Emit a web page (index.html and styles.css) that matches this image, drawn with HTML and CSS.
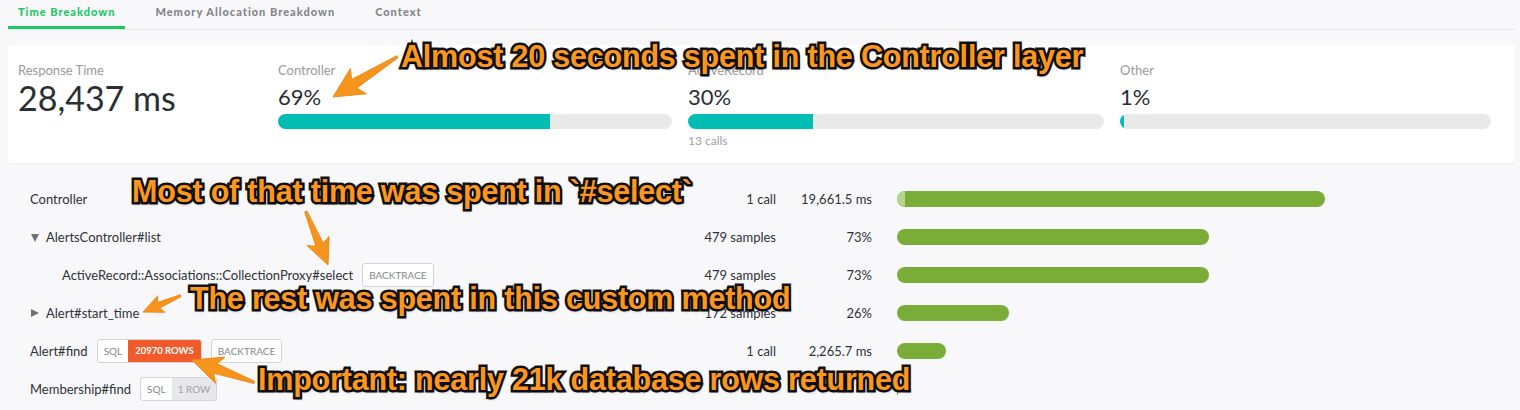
FILE: index.html
```html
<!DOCTYPE html>
<html lang="en">
<head>
    <meta charset="UTF-8">
    <title>Trace - Time Breakdown</title>
    <link rel="stylesheet" href="styles.css">
</head>
<body>
<nav class="tabs">
    <a class="tab active" href="#">Time Breakdown</a>
    <a class="tab" href="#">Memory Allocation Breakdown</a>
    <a class="tab" href="#">Context</a>
</nav>

<section class="summary">
    <div class="metric">
        <div class="metric-label">Response Time</div>
        <div class="metric-total">28,437 ms</div>
    </div>
    <div class="metric">
        <div class="metric-label">Controller</div>
        <div class="metric-value">69%</div>
        <div class="track"><div class="fill" style="width: 69%"></div></div>
    </div>
    <div class="metric">
        <div class="metric-label">ActiveRecord</div>
        <div class="metric-value">30%</div>
        <div class="track"><div class="fill" style="width: 30%"></div></div>
        <div class="metric-note">13 calls</div>
    </div>
    <div class="metric">
        <div class="metric-label">Other</div>
        <div class="metric-value">1%</div>
        <div class="track"><div class="fill" style="width: 1%"></div></div>
    </div>
</section>

<section class="breakdown">
    <div class="row">
        <div class="name">Controller</div>
        <div class="count">1 call</div>
        <div class="amount">19,661.5 ms</div>
        <div class="bar"><div class="bar-fill" style="width: 428px"><span class="bar-self"></span></div></div>
    </div>
    <div class="row">
        <div class="name"><span class="toggle open"></span>AlertsController#list</div>
        <div class="count">479 samples</div>
        <div class="amount">73%</div>
        <div class="bar"><div class="bar-fill" style="width: 312px"></div></div>
    </div>
    <div class="row">
        <div class="name nested">ActiveRecord::Associations::CollectionProxy#select <span class="tag">Backtrace</span></div>
        <div class="count">479 samples</div>
        <div class="amount">73%</div>
        <div class="bar"><div class="bar-fill" style="width: 312px"></div></div>
    </div>
    <div class="row">
        <div class="name"><span class="toggle"></span>Alert#start_time</div>
        <div class="count">172 samples</div>
        <div class="amount">26%</div>
        <div class="bar"><div class="bar-fill" style="width: 112px"></div></div>
    </div>
    <div class="row">
        <div class="name">Alert#find <span class="sql"><span class="sql-label">SQL</span><span class="sql-rows hot">20970 rows</span></span> <span class="tag">Backtrace</span></div>
        <div class="count">1 call</div>
        <div class="amount">2,265.7 ms</div>
        <div class="bar"><div class="bar-fill" style="width: 49px"></div></div>
    </div>
    <div class="row">
        <div class="name">Membership#find <span class="sql"><span class="sql-label">SQL</span><span class="sql-rows">1 row</span></span></div>
        <div class="count"></div>
        <div class="amount"></div>
        <div class="bar"><div class="bar-fill thin" style="width: 1px"></div></div>
    </div>
</section>

<!-- skitch style annotations laid over the screenshot -->
<svg class="arrows" width="1520" height="410" viewBox="0 0 1520 410">
    <g class="arrow" transform="translate(333 97) rotate(-32)">
        <polygon points="0,0 30,-15 25,-5 76,-1.2 76,1.2 25,5 30,15"/>
    </g>
    <g class="arrow" transform="translate(328 265) rotate(-112.5)">
        <polygon points="0,0 26,-12 22,-4 58,-1.2 58,1.2 22,4 26,12"/>
    </g>
    <g class="arrow" transform="translate(143 312) rotate(-23.4)">
        <polygon points="0,0 20,-9 17,-3 41,-1 41,1 17,3 20,9"/>
    </g>
    <g class="arrow" transform="translate(192 360) rotate(19.8)">
        <polygon points="0,0 30,-14 25,-5 66,-1.2 66,1.2 25,5 30,14"/>
    </g>
</svg>
<div class="note note-controller">Almost 20 seconds spent in the Controller layer</div>
<div class="note note-select">Most of that time was spent in `#select`</div>
<div class="note note-custom">The rest was spent in this custom method</div>
<div class="note note-rows">Important: nearly 21k database rows returned</div>
</body>
</html>
```

FILE: styles.css
```css
body {
    margin: 0;
    background: #f8f8fa;
    font-family: Lato, "Open Sans", Arial, sans-serif;
    color: #2f3238;
    width: 1520px;
    height: 410px;
    overflow: hidden;
    position: relative;
}

/* tabs */
.tabs {
    display: flex;
    margin: 0 5px 0 8px;
    border-bottom: 1px solid #e3e4e8;
}
.tab {
    display: block;
    padding: 5px 10px 7px;
    margin-right: 20px;
    font-size: 11px;
    line-height: 14px;
    font-weight: 900;
    letter-spacing: 1px;
    color: #85858a;
    text-decoration: none;
    border-bottom: 3px solid transparent;
}
.tab.active {
    color: #1ec664;
    border-bottom-color: #1ec664;
}

/* summary card */
.summary {
    display: grid;
    grid-template-columns: 244px 394px 416px 371px;
    column-gap: 16px;
    height: 118px;
    box-sizing: border-box;
    margin: 15px 5px 0 8px;
    padding: 17px 10px 0;
    background: #fff;
    border-radius: 3px;
    box-shadow: 0 1px 1px rgba(0, 0, 0, 0.04);
}
.metric-label {
    font-size: 13px;
    line-height: 16px;
    color: #9a9a9e;
}
.metric-total {
    margin-top: 2px;
    font-size: 34px;
    line-height: 36px;
    color: #2b2e33;
}
.metric-value {
    margin-top: 6px;
    font-size: 22px;
    line-height: 26px;
    color: #2b2e33;
}
.track {
    margin-top: 4px;
    height: 15px;
    border-radius: 8px;
    background: #e9e9ea;
    overflow: hidden;
}
.fill {
    height: 100%;
    background: #00bdb3;
}
.metric-note {
    margin-top: 5px;
    font-size: 12px;
    line-height: 14px;
    color: #a0a0a4;
}

/* call breakdown */
.breakdown {
    margin-top: 17px;
}
.row {
    display: grid;
    grid-template-columns: 646px 100px 96px 428px;
    align-items: center;
    height: 38px;
    padding-left: 30px;
    font-size: 13px;
}
.row .bar {
    margin-left: 25px;
}
.name {
    display: flex;
    align-items: center;
    white-space: nowrap;
}
.name.nested {
    padding-left: 32px;
}
.toggle {
    width: 0;
    height: 0;
    margin: 0 7px 0 1px;
    border-top: 4px solid transparent;
    border-bottom: 4px solid transparent;
    border-left: 8px solid #707074;
}
.toggle.open {
    margin-top: 1px;
    border-left: 4px solid transparent;
    border-right: 4px solid transparent;
    border-top: 8px solid #707074;
    border-bottom: 0;
}
.count,
.amount {
    text-align: right;
}
.bar-fill {
    position: relative;
    height: 16px;
    border-radius: 8px;
    background: #7aad37;
    overflow: hidden;
}
.bar-fill.thin {
    height: 6px;
    border-radius: 0;
    margin-top: 6px;
}
.bar-self {
    position: absolute;
    left: 0;
    top: 0;
    bottom: 0;
    width: 8px;
    background: #b4d58e;
}
.tag {
    display: inline-block;
    margin-left: 9px;
    padding: 0 6px;
    height: 22px;
    line-height: 22px;
    border: 1px solid #d4d4d8;
    border-radius: 3px;
    background: #fff;
    font-size: 10px;
    text-transform: uppercase;
    color: #85878c;
}
.sql {
    display: inline-flex;
    margin-left: 9px;
    height: 22px;
    line-height: 22px;
    border: 1px solid #d4d4d8;
    border-radius: 3px;
    background: #fff;
    overflow: hidden;
    font-size: 10px;
    text-transform: uppercase;
}
.sql-label {
    padding: 0 6px;
    color: #85878c;
}
.sql-rows {
    padding: 0 6px;
    background: #e8e8ea;
    color: #a2a3a7;
}
.sql-rows.hot {
    padding: 0 7px;
    background: #f15a2b;
    color: #fff;
    font-weight: bold;
    font-size: 9.5px;
}

/* annotations */
.arrows {
    position: absolute;
    left: 0;
    top: 0;
    pointer-events: none;
}
.arrow polygon {
    fill: #f7941e;
    stroke: #e9850f;
    stroke-width: 0.8;
    stroke-linejoin: round;
}
.note {
    position: absolute;
    font-family: "Liberation Sans", Arial, sans-serif;
    font-weight: bold;
    font-size: 30.5px;
    line-height: 30px;
    letter-spacing: -0.2px;
    white-space: nowrap;
    color: #fb971f;
    -webkit-text-stroke: 5px #111;
    paint-order: stroke fill;
    text-shadow: 1px 2px 3px rgba(0, 0, 0, 0.45);
}
.note-controller {
    left: 401px;
    top: 41px;
}
.note-select {
    left: 132px;
    top: 176px;
}
.note-custom {
    left: 190px;
    top: 283px;
}
.note-rows {
    left: 258px;
    top: 364px;
}
```
